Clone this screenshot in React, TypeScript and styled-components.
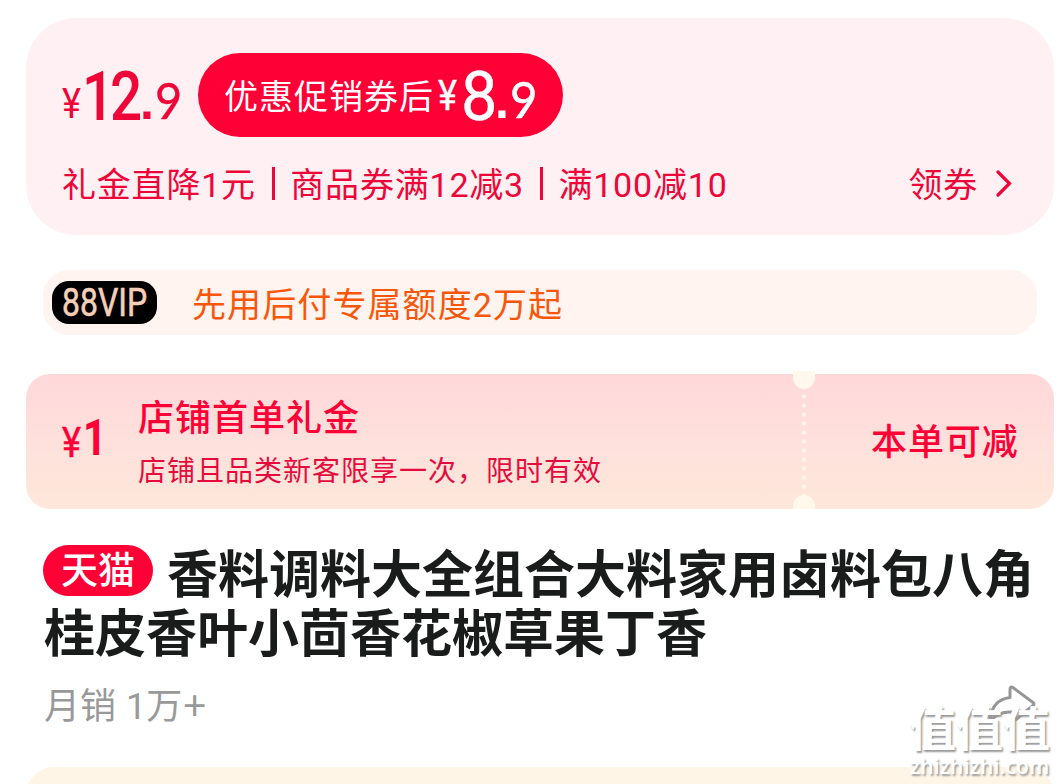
import React from "react";
import styled, { createGlobalStyle } from "styled-components";

const red = "#ff0036";
const deepRed = "#ee0639";
const cjk = `"Noto Sans CJK SC", sans-serif`;
// latin digits come from Roboto, everything else falls through to the CJK face
const mixed = `Roboto, "Noto Sans CJK SC", sans-serif`;

const GlobalStyle = createGlobalStyle`
  * {
    box-sizing: border-box;
  }
  body {
    margin: 0;
    background-color: #fff;
    font-family: ${cjk};
  }
`;

interface FigureProps {
  size: number;
  width: number;
  stretch?: number;
  weight?: number;
  ml?: number;
  spacing?: number;
  lift?: number;
  family?: string;
  outline?: number;
}

const App = (): React.ReactElement => {
  return (
    <Page>
      <GlobalStyle />
      <PriceCard>
        <PriceRow>
          <Price>
            <Figure size={42} width={24} stretch={0.86} lift={2}>
              ¥
            </Figure>
            <Figure size={69} width={57} ml={-4} stretch={0.82} weight={500} spacing={-5}>
              12
            </Figure>
            <Figure size={50} width={13} family="Liberation Sans" weight={700} ml={1} lift={1}>
              .
            </Figure>
            <Figure size={51} width={26} stretch={0.92} family="Lato" ml={2} lift={1} outline={0.4}>
              9
            </Figure>
          </Price>
          <CouponPill>
            <PillLabel>优惠促销券后</PillLabel>
            <Figure size={42} width={23} stretch={0.86} lift={10} outline={0.4}>
              ¥
            </Figure>
            <Figure size={69} width={34} stretch={0.94} outline={0.4}>
              8
            </Figure>
            <Figure size={50} width={13} family="Liberation Sans" weight={700} lift={2}>
              .
            </Figure>
            <Figure size={51} width={26} stretch={0.93} family="Lato" ml={2} lift={2} outline={0.5}>
              9
            </Figure>
          </CouponPill>
        </PriceRow>
        <PromoRow>
          <span>礼金直降1元</span>
          <Bar />
          <span>商品券满12减3</span>
          <Bar />
          <span>满100减10</span>
          <GetCoupon>
            领券
            <svg width="16" height="30" viewBox="0 0 16 30" fill="none">
              <path d="M2 5 13.5 16.5 2 28" stroke={deepRed} strokeWidth="3.2" strokeLinecap="round" />
            </svg>
          </GetCoupon>
        </PromoRow>
      </PriceCard>

      <VipBar>
        <VipBadge>
          <Figure size={38} width={84} stretch={0.84} outline={0.6}>
            88VIP
          </Figure>
        </VipBadge>
        <VipText>先用后付专属额度2万起</VipText>
      </VipBar>

      <Gift>
        <GiftAmount>
          <Figure size={42} width={21} stretch={0.86} outline={0.5}>
            ¥
          </Figure>
          <Figure size={50} width={22} stretch={0.82} weight={700} lift={2}>
            1
          </Figure>
        </GiftAmount>
        <GiftInfo>
          <GiftTitle>店铺首单礼金</GiftTitle>
          <GiftNote>店铺且品类新客限享一次，限时有效</GiftNote>
        </GiftInfo>
        <Perforation />
        <GiftAction>本单可减</GiftAction>
      </Gift>

      <Title>
        <TitleLine>
          <Tmall>天猫</Tmall>
          香料调料大全组合大料家用卤料包八角
        </TitleLine>
        <TitleLine>桂皮香叶小茴香花椒草果丁香</TitleLine>
      </Title>

      <MetaRow>
        <Sales>
          月销 1万<Plus>+</Plus>
        </Sales>
        <svg width="50" height="42" viewBox="0 0 50 42" fill="none">
          <path
            d="M3 36C4 22 11 14 23 12.5V4.5Q23 0.5 26.5 3L46 17.5Q48 19 46 20.5L29 34.5Q25 37 25 33V27Q12 26 3 36Z"
            stroke="#979797"
            strokeWidth="3"
            strokeLinejoin="round"
          />
        </svg>
      </MetaRow>

      <NextCard />

      <Watermark>
        <MarkName>值值值</MarkName>
        <MarkSite>zhizhizhi.com</MarkSite>
      </Watermark>
    </Page>
  );
};

export default App;

const Page = styled.div`
  position: relative;
  width: 1060px;
  height: 784px;
  padding: 18px 6px 0 26px;
  overflow: hidden;
  background-color: #fff;
`;
const Figure = styled.span<FigureProps>`
  display: inline-block;
  width: ${(props) => props.width}px;
  margin-left: ${(props) => props.ml || 0}px;
  font-family: ${(props) => (props.family ? `"${props.family}"` : "Roboto")}, sans-serif;
  font-size: ${(props) => props.size}px;
  font-weight: ${(props) => props.weight || 400};
  letter-spacing: ${(props) => props.spacing || 0}px;
  line-height: 1;
  white-space: nowrap;
  -webkit-text-stroke: ${(props) => props.outline || 0}px currentColor;
  transform: translateY(${(props) => -(props.lift || 0)}px)
    scaleX(${(props) => props.stretch || 1});
  transform-origin: 0 50%;
`;
const PriceCard = styled.section`
  height: 217px;
  padding: 35px 42px 0 36px;
  border-radius: 50px;
  background-color: #fff0f3;
  color: ${deepRed};
`;
const PriceRow = styled.div`
  display: flex;
  height: 84px;
`;
const Price = styled.div`
  display: flex;
  align-items: baseline;
  width: 136px;
  padding-top: 9px;
`;
const CouponPill = styled.div`
  display: flex;
  align-items: baseline;
  width: 365px;
  height: 84px;
  padding: 9px 0 0 26px;
  border-radius: 42px;
  background-color: ${red};
  color: #fff;
`;
const PillLabel = styled.span`
  align-self: flex-start;
  width: 214px;
  font-size: 34px;
  letter-spacing: 1px;
  line-height: 66px;
`;
const PromoRow = styled.div`
  display: flex;
  align-items: center;
  height: 50px;
  margin-top: 20px;
  font-family: ${mixed};
  font-size: 34px;
  letter-spacing: 0.8px;
  white-space: nowrap;
`;
const Bar = styled.i`
  width: 3px;
  height: 33px;
  margin: 3px 15.7px 0;
  background-color: ${deepRed};
`;
const GetCoupon = styled.div`
  display: flex;
  align-items: center;
  gap: 18px;
  margin-left: auto;
`;
const VipBar = styled.section`
  display: flex;
  align-items: center;
  height: 65px;
  margin: 35px 17px 0;
  padding-left: 9px;
  border-radius: 26px;
  background-color: #fff4f0;
`;
const VipBadge = styled.div`
  display: flex;
  align-items: center;
  width: 105px;
  height: 43px;
  padding-left: 10px;
  border-radius: 17px;
  background-color: #000;
  color: #f5cfb8;
`;
const VipText = styled.span`
  margin-left: 35px;
  color: #f9560a;
  font-family: ${mixed};
  font-size: 34px;
  letter-spacing: 1.1px;
`;
const Gift = styled.section`
  display: flex;
  height: 135px;
  margin-top: 39px;
  padding-left: 36px;
  border-radius: 24px;
  background: linear-gradient(#ffd8da, #fee1dc 55%, #fee7d9);
  color: ${red};
`;
const GiftAmount = styled.div`
  display: flex;
  align-items: baseline;
  width: 76px;
  padding-top: 41px;
`;
const GiftInfo = styled.div`
  display: flex;
  flex-direction: column;
  width: 655px;
  padding-top: 16px;
`;
const GiftTitle = styled.div`
  font-size: 36px;
  font-weight: 500;
  letter-spacing: 1px;
  line-height: 50px;
`;
const GiftNote = styled.div`
  margin-top: 8px;
  color: #e50c3d;
  font-size: 28px;
  letter-spacing: 1px;
  line-height: 42px;
`;
const Perforation = styled.div`
  position: relative;
  width: 22px;
  background: radial-gradient(circle, #fff6ea 1.6px, transparent 2.6px) 50% 0 / 10px 9px repeat-y;

  &::before,
  &::after {
    content: "";
    position: absolute;
    left: 0;
    width: 22px;
    height: 18px;
    background-color: #fff8eb;
  }
  &::before {
    top: -3px;
    border-radius: 0 0 11px 11px;
  }
  &::after {
    bottom: 0;
    height: 14px;
    border-radius: 11px 11px 0 0;
  }
`;
const GiftAction = styled.div`
  flex: 1;
  padding-left: 56px;
  font-size: 36px;
  font-weight: 500;
  letter-spacing: 0.9px;
  line-height: 130px;
`;
const Title = styled.h1`
  height: 118px;
  margin: 36px 0 0 18px;
  color: #191c1b;
  font-size: 51px;
  font-weight: 700;
  line-height: 59px;
  white-space: nowrap;
`;
const TitleLine = styled.span`
  display: flex;
  height: 59px;
  line-height: 53px;
`;
const Tmall = styled.span`
  width: 110px;
  height: 51px;
  margin: 0 14px 0 -1px;
  border-radius: 26px;
  background-color: ${red};
  color: #fff;
  font-size: 37px;
  font-weight: 500;
  line-height: 47px;
  text-align: center;
`;
const MetaRow = styled.div`
  display: flex;
  align-items: center;
  justify-content: space-between;
  height: 50px;
  margin-top: 18px;
  padding: 0 17px 0 18px;
  color: #999;
  font-size: 36px;
`;
const Sales = styled.span`
  height: 50px;
  font-family: ${mixed};
  line-height: 46px;
  word-spacing: 1px;
`;
const Plus = styled.span`
  position: relative;
  top: 2px;
  margin-left: 1px;
  font-family: ${cjk};
  font-size: 41px;
  line-height: 1;
`;
const NextCard = styled.section`
  height: 60px;
  margin-top: 36px;
  border-radius: 28px;
  background-color: #fff5e6;
`;
const Watermark = styled.div`
  position: absolute;
  right: 7px;
  bottom: 5px;
  width: 144px;
  color: #fff;
  text-shadow: 1.5px 1.5px 2px #999;
`;
const MarkName = styled.div`
  font-size: 47px;
  font-weight: 700;
  line-height: 54px;
`;
const MarkSite = styled.div`
  margin-left: 1px;
  font-family: "Open Sans", sans-serif;
  font-size: 21px;
  font-weight: 600;
  letter-spacing: 0.2px;
  line-height: 26px;
`;
